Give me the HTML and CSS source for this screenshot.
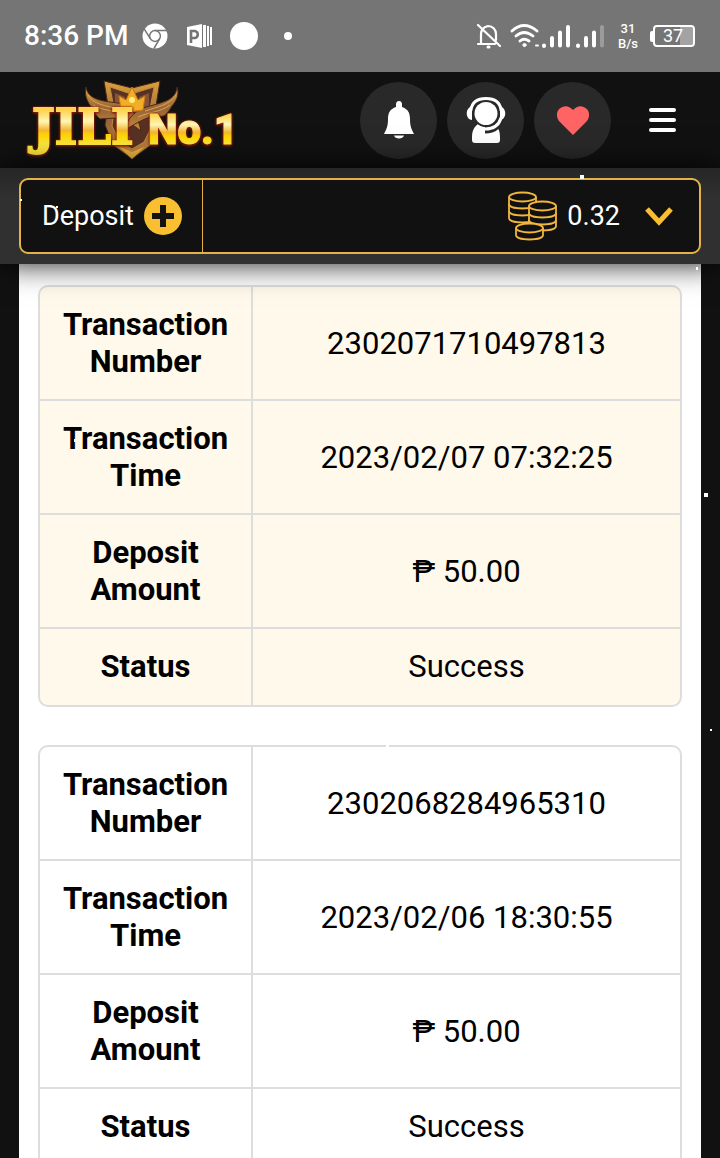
FILE: index.html
```html
<!DOCTYPE html>
<html lang="en">

<head>
  <meta charset="UTF-8">
  <meta name="viewport" content="width=device-width, initial-scale=1.0">
  <title>JILI No.1 - Deposit Record</title>
  <link rel="stylesheet" href="styles.css">
</head>

<body>
  <div class="status-bar">
    <span class="clock">8:36 PM</span>
    <svg class="st-chrome" width="26" height="26" viewBox="0 0 26 26">
      <circle cx="13" cy="13" r="12.5" fill="#fff" />
      <g fill="none" stroke="#757575" stroke-width="1.5">
        <circle cx="13" cy="13" r="5.4" />
        <path d="M13 7.6H25M8.3 15.7L2 5.6M17.7 15.7L12 25.5" />
      </g>
    </svg>
    <svg class="st-app" width="25" height="26" viewBox="0 0 25 26">
      <path fill="#fff" d="M0 4L15 1V25L0 22ZM16 2H19V24H16ZM20 3H22V23H20ZM23 4H25V22H23Z" />
      <path fill="none" stroke="#757575" stroke-width="2.6" d="M4 20V8H8A3.600 3.600 0 0 1 8 15H4" />
    </svg>
    <span class="st-circle"></span>
    <span class="st-dot"></span>
    <div class="status-right">
      <svg width="26" height="26" viewBox="0 0 26 26" fill="none" stroke="#fff" stroke-width="2.2" stroke-linecap="round">
        <path d="M5 21V11C5 7 8 4 12 3C17 3 20 7 20 11V17M2 21H19M2 2L24 23" />
        <path stroke-width="3" d="M12 24H13" />
      </svg>
      <svg class="st-wifi" width="30" height="26" viewBox="0 0 30 26" fill="none" stroke="#fff" stroke-width="2.8" stroke-linecap="round">
        <path d="M2 8Q14-3 27 8M6 13Q14 6 23 13M10 18Q14 14.500 19 18" />
        <circle cx="14.500" cy="22" r="1.600" fill="#fff" stroke-width="1" />
        <path stroke-width="2" d="M26 22.500H28" />
      </svg>
      <svg width="64" height="26" viewBox="0 0 64 26" fill="none" stroke="#fff" stroke-width="4" stroke-linecap="round">
        <path d="M4 22.500V23M12 15V22.500M20 9.500V22.500M28 4V22.500M38 22.500V23M46 15V22.500M54 9.500V22.500" />
        <path stroke="#9b9b9b" d="M62 4V22.500" />
      </svg>
      <div class="net-speed"><span>31</span><span>B/s</span></div>
      <div class="battery"><span>37</span></div>
    </div>
  </div>

  <header class="top-bar">
    <a class="logo" href="#" aria-label="JILI No.1">
      <svg width="224" height="86" viewBox="0 0 224 86">
        <defs>
          <linearGradient id="gold" x1="0" y1="0" x2="0" y2="1">
            <stop offset="0.2" stop-color="#ffd34d" />
            <stop offset="0.4" stop-color="#fff6b5" />
            <stop offset="0.56" stop-color="#f2b632" />
            <stop offset="0.64" stop-color="#ffd500" />
            <stop offset="0.8" stop-color="#ffea3d" />
          </linearGradient>
          <linearGradient id="bronze" x1="0" y1="0" x2="0" y2="1">
            <stop offset="0" stop-color="#dba23a" />
            <stop offset="0.5" stop-color="#966339" />
            <stop offset="1" stop-color="#c98b38" />
          </linearGradient>
        </defs>
        <path fill="url(#bronze)" stroke="#4b2517" d="M82 4L110 11L138 4L134 29L137 48L129 68L110 82L91 68L83 48L86 29Z" />
        <path fill="#573124" stroke="#c08a3d" d="M88 10L109 17L132 10L128 32L130 49L122 65L110 72L98 65L90 49L92 32Z" />
        <path fill="#875239" d="M93 16L103 20V37L93 34ZM127 16L117 20V37L127 34ZM96 50L108 60V67L99 61Z" />
        <path fill="url(#bronze)" stroke="#4b2517" d="M64 10C66 22 78 24 96 26C108 28 116 38 119 54C110 47 102 43 94 41L78 42C74 39 72 34 70 31C65 25 62 17 64 10Z" />
        <path fill="url(#bronze)" stroke="#4b2517" d="M155 10C154 22 144 25 124 30C114 33 105 41 102 54C112 47 120 43 128 40L142 39C146 36 148 32 150 29C156 22 157 16 155 10Z" />
        <path fill="none" stroke="#dda450" d="M66 18C71 27 83 29 98 32M71 28C80 34 94 33 106 39M154 18C147 28 136 30 123 34M148 28C139 35 127 35 116 40" />
        <path fill="#f3ae24" stroke="#c47a1c" d="M97 19L104 23L110 10L116 23L123 19L121 33Q110 36 99 33Z" />
        <circle cx="110" cy="23" r="3" fill="#ffef78" />
        <path fill="#eeb63f" d="M98 70L110 75L122 70L110 82Z" />
        <g class="logo-text" fill="url(#gold)" stroke="url(#gold)">
          <text class="logo-jili" x="10" y="67">JILI</text>
          <text class="logo-no" x="126" y="67">No.1</text>
        </g>
      </svg>
    </a>
    <nav class="top-nav">
      <button class="round-btn" type="button" aria-label="Notifications">
        <svg width="32" height="38" viewBox="0 0 32 38" fill="#fff">
          <path d="M16 0C18 0 19 1.500 19 3.500V6C25 8 27 12 27 18C27 26 29 29 31 33H1C3 29 5 26 5 18C5 12 7 8 13 6V3.500C13 1.500 14 0 16 0Z" />
          <path d="M11 34.500H21C20 38.500 12 38.500 11 34.500Z" />
        </svg>
      </button>
      <button class="round-btn" type="button" aria-label="Customer service">
        <svg width="40" height="48" viewBox="0 0 40 48">
          <path fill="#fff" d="M12 28C17 32 24 32 29 28C32 31 34 35 34 41V44Q34 47 31 47H9Q6 47 6 44V41C6 35 8 31 12 28Z" />
          <path fill="none" stroke="#292929" stroke-width="7" d="M34 21C34 29 28 34 19 34" />
          <circle cx="20" cy="17.500" r="13.500" fill="#292929" />
          <circle cx="20" cy="17.500" r="11.500" fill="#fff" />
          <path fill="none" stroke="#fff" stroke-width="3" stroke-linecap="round" d="M5 14C6 6 12 2.500 20 2.500S34 6 35 14M35 22C33 29 28 33 19 33" />
          <path fill="#fff" d="M6 10V24C-1 23-1 12 6 10ZM34 10V24C41 23 41 12 34 10Z" />
        </svg>
      </button>
      <button class="round-btn" type="button" aria-label="Favorites">
        <svg width="32" height="29" viewBox="0 0 32 29">
          <path fill="#ff6464" d="M16 29L3 16C-1 12-1 6 2.500 2.800C6.500-1 12-.6 16 4C20-.6 25.500-1 29.500 2.800C33 6 33 12 29 16Z" />
        </svg>
      </button>
      <button class="menu-btn" type="button" aria-label="Menu">
        <span></span>
        <span></span>
        <span></span>
      </button>
    </nav>
  </header>

  <section class="wallet">
    <div class="wallet-box">
      <button class="deposit-btn" type="button">
        <span>Deposit</span>
        <svg width="38" height="38" viewBox="0 0 38 38">
          <circle cx="19" cy="19" r="19" fill="#f9bf30" />
          <path d="M19 8V30M8 19H30" stroke="#151212" stroke-width="6" stroke-linejoin="round" />
        </svg>
      </button>
      <button class="balance-btn" type="button">
        <svg width="50" height="50" viewBox="0 0 50 50" fill="#111" stroke="#f2b63f" stroke-width="1.8">
          <path d="M2 6V27C2 33 29 33 29 27V6" />
          <ellipse cx="15.500" cy="6" rx="13.500" ry="4.500" />
          <path fill="none" d="M2 13C2 19 29 19 29 13M2 20C2 26 29 26 29 20" />
          <path d="M22 15V35C22 41 49 41 49 35V15" />
          <ellipse cx="35.500" cy="15" rx="13.500" ry="4.500" />
          <path fill="none" d="M22 22C22 28 49 28 49 22M22 29C22 35 49 35 49 29" />
          <path d="M9 37V44C9 50 36 50 36 44V37" />
          <ellipse cx="22.500" cy="37" rx="13.500" ry="4.500" />
        </svg>
        <span class="balance">0.32</span>
        <svg width="28" height="20" viewBox="0 0 28 20">
          <path d="M2 3L14 16L26 3" fill="none" stroke="#f9bf30" stroke-width="5" />
        </svg>
      </button>
    </div>
  </section>

  <main class="records">
    <table class="record odd">
      <tr>
        <th scope="row">Transaction Number</th>
        <td>2302071710497813</td>
      </tr>
      <tr>
        <th scope="row">Transaction Time</th>
        <td>2023/02/07 07:32:25</td>
      </tr>
      <tr>
        <th scope="row">Deposit Amount</th>
        <td>₱ 50.00</td>
      </tr>
      <tr>
        <th scope="row">Status</th>
        <td>Success</td>
      </tr>
    </table>
    <table class="record">
      <tr>
        <th scope="row">Transaction Number</th>
        <td>2302068284965310</td>
      </tr>
      <tr>
        <th scope="row">Transaction Time</th>
        <td>2023/02/06 18:30:55</td>
      </tr>
      <tr>
        <th scope="row">Deposit Amount</th>
        <td>₱ 50.00</td>
      </tr>
      <tr>
        <th scope="row">Status</th>
        <td>Success</td>
      </tr>
    </table>
  </main>

  <!-- floating particles -->
  <svg class="particles" fill="#fff" aria-hidden="true">
    <rect x="580" y="175" width="4" height="4" />
    <rect x="704" y="493" width="4" height="4" />
    <rect x="696" y="267" width="2" height="3" />
    <rect x="710" y="729" width="2" height="2" />
    <rect x="20" y="199" width="2" height="2" />
    <rect x="56" y="206" width="2" height="2" />
    <rect x="74" y="439" width="2" height="3" />
    <rect x="386" y="744" width="3" height="3" />
  </svg>
</body>

</html>
```

FILE: styles.css
```css
* {
  box-sizing: border-box;
}

body {
  display: flex;
  flex-direction: column;
  height: 100vh;
  margin: 0;
  overflow: hidden;
  background: #111;
  color: #000;
  font-family: Roboto, "Liberation Sans", sans-serif;
}

svg {
  display: block;
  flex: none;
}

button {
  padding: 0;
  border: 0;
  background: none;
  color: #fff;
  font: inherit;
  cursor: pointer;
}

/* phone status bar */
.status-bar {
  display: flex;
  flex: none;
  align-items: center;
  height: 72px;
  padding: 0 25px 0 24px;
  background: #757575;
  color: #fff;
}

.clock {
  font-size: 28px;
  font-weight: 500;
  line-height: 32px;
}

.st-chrome {
  margin-left: 14px;
}

.st-app {
  margin-left: 19px;
}

.st-circle {
  width: 28px;
  height: 28px;
  margin-left: 18px;
  border-radius: 50%;
  background: #fff;
}

.st-dot {
  width: 8px;
  height: 8px;
  margin-left: 26px;
  border-radius: 50%;
  background: #fff;
}

.status-right {
  display: flex;
  align-items: center;
  margin-left: auto;
}

.st-wifi {
  margin-left: 8px;
}

.net-speed {
  display: flex;
  flex-direction: column;
  align-items: center;
  margin: 0 12px 0 14px;
  font-size: 13px;
  font-weight: 500;
  line-height: 15px;
}

.battery {
  display: flex;
  align-items: center;
}

.battery::before {
  content: "";
  width: 3px;
  height: 11px;
  border-radius: 2px 0 0 2px;
  background: #fff;
}

.battery span {
  width: 42px;
  height: 22px;
  padding-left: 8px;
  border: 2px solid #fff;
  border-radius: 4px;
  background: linear-gradient(90deg, transparent 55%, #a3a3a3 55%) content-box;
  font-size: 18px;
  line-height: 18px;
}

/* header */
.top-bar {
  display: flex;
  flex: none;
  align-items: center;
  justify-content: space-between;
  height: 96px;
  padding: 0 44px 0 22px;
  background: #111;
}

.logo-text {
  filter: drop-shadow(0 0 1px #8c1c05) drop-shadow(0 1px 1px #8c1c05);
}

.logo-jili {
  font-family: "DejaVu Serif", serif;
  font-size: 48px;
  font-weight: 700;
  stroke-width: 2px;
}

.logo-no {
  font-size: 42px;
  font-weight: 900;
  stroke-width: 1px;
}

.top-nav {
  display: flex;
  align-items: center;
  gap: 10px;
}

.round-btn {
  display: flex;
  align-items: center;
  justify-content: center;
  width: 77px;
  height: 77px;
  border-radius: 50%;
  background: #292929;
}

.menu-btn {
  display: flex;
  flex-direction: column;
  gap: 6px;
  width: 27px;
  margin-left: 28px;
}

.menu-btn span {
  height: 4px;
  border-radius: 2px;
  background: #fff;
}

/* deposit and balance */
.wallet {
  position: relative;
  z-index: 1;
  flex: none;
  padding: 10px 19px;
  background: linear-gradient(#262626, #303030 30%);
  box-shadow: 0 0 28px rgba(0, 0, 0, .9);
}

.wallet-box {
  display: flex;
  justify-content: space-between;
  height: 76px;
  border: 2px solid #e3b347;
  border-radius: 9px;
  background: #111;
  font-size: 27px;
}

.deposit-btn {
  display: flex;
  align-items: center;
  gap: 10px;
  padding: 0 20px 0 21px;
  border-right: 1px solid #e3b347;
}

.balance-btn {
  display: flex;
  align-items: center;
  padding-right: 26px;
}

.balance {
  margin: 0 25px 0 10px;
}

/* record list */
.records {
  flex: 1;
  min-height: 0;
  margin: 0 19px;
  padding: 21px 19px;
  overflow-y: auto;
  scrollbar-width: none;
  background: #fff;
}

.record {
  width: 100%;
  margin-bottom: 38px;
  border: 2px solid #ddd;
  border-radius: 10px;
  border-spacing: 0;
  table-layout: fixed;
  font-size: 31px;
  line-height: 37px;
  text-align: center;
}

.record.odd {
  background: #fef9eb;
}

.record th,
.record td {
  padding: 19px 10px;
  border-bottom: 2px solid #ddd;
}

.record th {
  width: 213px;
  border-right: 2px solid #ddd;
  font-weight: 700;
}

.record tr:last-child th,
.record tr:last-child td {
  padding-bottom: 20px;
  border-bottom: 0;
}

.particles {
  position: absolute;
  top: 0;
  left: 0;
  z-index: 2;
  width: 100%;
  height: 100%;
  pointer-events: none;
}
```
